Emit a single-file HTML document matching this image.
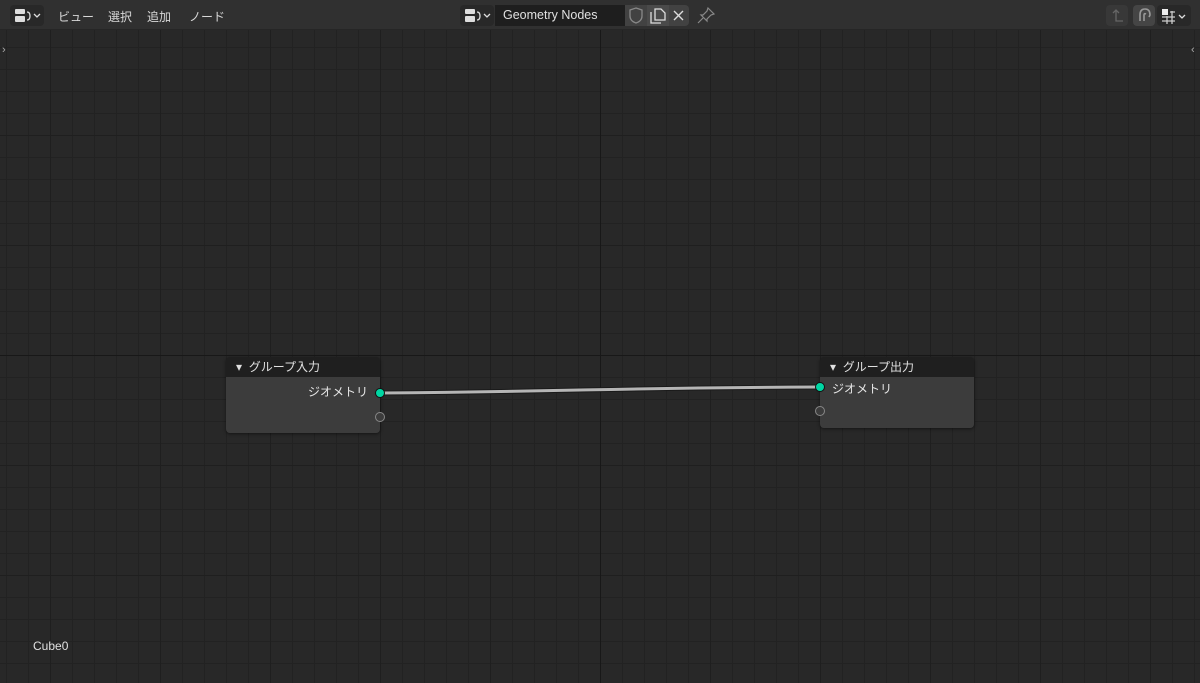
<!DOCTYPE html>
<html><head><meta charset="utf-8"><style>
*{margin:0;padding:0;box-sizing:border-box}
body{width:1200px;height:683px;overflow:hidden;background:#282828;font-family:"Liberation Sans","Noto Sans CJK JP",sans-serif;position:relative}
.grid{position:absolute;left:0;top:0;width:1200px;height:683px;
background-image:
linear-gradient(to right,#181818 0,#181818 1px,transparent 1px),
linear-gradient(to bottom,#181818 0,#181818 1px,transparent 1px),
linear-gradient(to right,#1f1f1f 0,#1f1f1f 1px,transparent 1px),
linear-gradient(to bottom,#1f1f1f 0,#1f1f1f 1px,transparent 1px),
linear-gradient(to right,#222 0,#222 1px,transparent 1px),
linear-gradient(to bottom,#222 0,#222 1px,transparent 1px);
background-size:1200px 683px,1200px 683px,110px 110px,110px 110px,22px 22px,22px 22px;
background-position:600px 0,0 355px,50px 25px,50px 25px,6px 3px,6px 3px;
background-repeat:no-repeat,no-repeat,repeat,repeat,repeat,repeat}
.hdr{position:absolute;left:0;top:0;width:1200px;height:30px;background:#303030;border-bottom:1px solid #262626}
.t{position:absolute;color:#d8d8d8;font-size:12px;top:8px}
.btn{position:absolute;top:5px;height:21px;background:#282828;border-radius:4px}
.node{position:absolute;border-radius:4px;overflow:hidden;box-shadow:0 1px 3px rgba(0,0,0,.5)}
.nh{height:20px;background:#1f1f1f;color:#e0e0e0;font-size:12px;line-height:20px;padding-left:10px}
.nb{background:#3c3c3c}
.sock{position:absolute;width:10px;height:10px;border-radius:50%}
</style></head><body>
<div class="grid"></div>
<div class="hdr">
<div class="btn" style="left:10px;width:34px"></div>
<svg style="position:absolute;left:14px;top:8px" width="28" height="16"><rect x="1" y="1" width="10" height="5" rx="1" fill="#ddd"/><rect x="1" y="8" width="10" height="6" rx="1" fill="#ddd"/><path d="M13 4 q3 0 3 4 q0 4 -3 4" stroke="#ddd" fill="none" stroke-width="1.3"/><path d="M20 6 l3 3 l3 -3" stroke="#ddd" fill="none" stroke-width="1.3"/></svg>
<span class="t" style="left:58px">ビュー</span>
<span class="t" style="left:108px">選択</span>
<span class="t" style="left:147px">追加</span>
<span class="t" style="left:189px">ノード</span>
<div class="btn" style="left:460px;width:34px"></div>
<svg style="position:absolute;left:464px;top:8px" width="28" height="16"><rect x="1" y="1" width="10" height="5" rx="1" fill="#ddd"/><rect x="1" y="8" width="10" height="6" rx="1" fill="#ddd"/><path d="M13 4 q3 0 3 4 q0 4 -3 4" stroke="#ddd" fill="none" stroke-width="1.3"/><path d="M20 6 l3 3 l3 -3" stroke="#ddd" fill="none" stroke-width="1.3"/></svg>
<div class="btn" style="left:495px;width:130px;background:#1e1e1e;border-radius:0"></div>
<span class="t" style="left:503px;color:#e0e0e0;font-size:12.5px">Geometry Nodes</span>
<div class="btn" style="left:625px;width:22px;background:#424242;border-radius:0"></div>
<svg style="position:absolute;left:628px;top:7px" width="16" height="17"><path d="M8 1 L14 3 V9 Q14 14 8 16 Q2 14 2 9 V3 Z" stroke="#888" fill="none" stroke-width="1.3"/></svg>
<div class="btn" style="left:647px;width:22px;background:#4a4a4a;border-radius:0"></div>
<svg style="position:absolute;left:649px;top:7px" width="18" height="17"><path d="M6 2 H12 L16 6 V13 H6 Z M2 5 V16 H12" stroke="#ddd" fill="none" stroke-width="1.3"/></svg>
<div class="btn" style="left:669px;width:20px;background:#424242;border-radius:0 4px 4px 0"></div>
<svg style="position:absolute;left:673px;top:10px" width="12" height="12"><path d="M1 1 L10 10 M10 1 L1 10" stroke="#ddd" stroke-width="1.4"/></svg>
<svg style="position:absolute;left:697px;top:7px" width="18" height="17"><path d="M11 1 L17 7 L14 8 L10 12 L10 14 L4 8 L6 8 L10 4 Z M6 11 L1 16" stroke="#888" fill="none" stroke-width="1.2"/></svg>
<div class="btn" style="left:1106px;width:22px;background:#383838"></div>
<svg style="position:absolute;left:1109px;top:8px" width="16" height="16"><path d="M4 5 L7 2 L10 5 M7 2 V13 H14" stroke="#666" fill="none" stroke-width="1.3"/></svg>
<div class="btn" style="left:1133px;width:22px;background:#454545"></div>
<svg style="position:absolute;left:1136px;top:7px" width="16" height="17"><path d="M4 14 L4 8 Q4 2 9 2 Q14 2 14 8 L13 10 M8 14 L8 8 Q8 6 10 7" stroke="#999" fill="none" stroke-width="1.6"/></svg>
<div class="btn" style="left:1157px;width:34px;background:#282828"></div>
<svg style="position:absolute;left:1160px;top:7px" width="30" height="17"><rect x="2" y="2" width="6" height="6" fill="#eee"/><path d="M2 10 H15 M2 14 H15 M7 9 V17 M12 4 V17 M10 5 H15" stroke="#ccc" stroke-width="1.3" fill="none"/><path d="M19 8 l3 3 l3 -3" stroke="#ddd" fill="none" stroke-width="1.3"/></svg>
</div>
<span style="position:absolute;left:2px;top:44px;color:#aaa;font-size:11px">›</span>
<span style="position:absolute;left:1191px;top:44px;color:#aaa;font-size:11px">‹</span>
<svg style="position:absolute;left:0;top:0" width="1200" height="683"><path d="M380 393 C 600 391, 600 388, 820 387" stroke="#1a1a1a" stroke-width="5" fill="none"/><path d="M380 393 C 600 391, 600 388, 820 387" stroke="#b5b5b5" stroke-width="3" fill="none"/></svg>
<div class="node" style="left:226px;top:357px;width:154px;height:76px">
<div class="nh">▾&nbsp; グループ入力</div>
<div class="nb" style="height:56px"><div style="color:#e6e6e6;font-size:12px;text-align:right;padding:6px 12px 0 0">ジオメトリ</div></div>
</div>
<div class="sock" style="left:375px;top:388px;background:#00d6a3;border:1px solid #111"></div>
<div class="sock" style="left:375px;top:412px;border:1px solid #888;background:#3c3c3c"></div>
<div class="node" style="left:820px;top:357px;width:154px;height:71px">
<div class="nh">▾&nbsp; グループ出力</div>
<div class="nb" style="height:51px"><div style="color:#e6e6e6;font-size:12px;padding:3px 0 0 12px">ジオメトリ</div></div>
</div>
<div class="sock" style="left:815px;top:382px;background:#00d6a3;border:1px solid #111"></div>
<div class="sock" style="left:815px;top:406px;border:1px solid #888;background:#3c3c3c"></div>
<span style="position:absolute;left:33px;top:639px;color:#e0e0e0;font-size:12px">Cube0</span>
</body></html>
